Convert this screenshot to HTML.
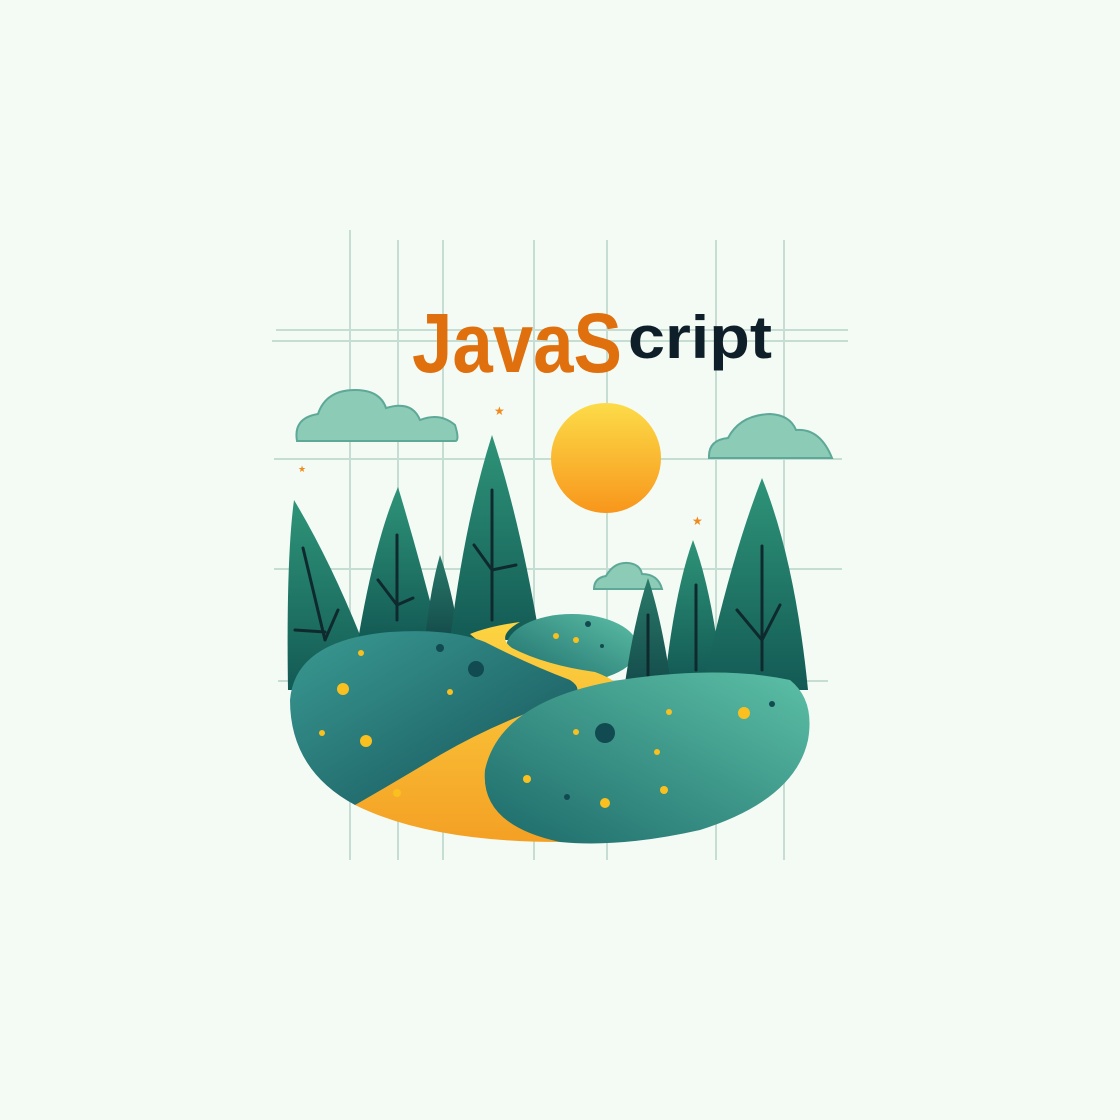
<!DOCTYPE html>
<html><head><meta charset="utf-8"><style>
html,body{margin:0;padding:0;background:#f4fbf5;}
svg{display:block}
</style></head><body>
<svg width="1120" height="1120" viewBox="0 0 1120 1120" xmlns="http://www.w3.org/2000/svg">
<defs>
<linearGradient id="sun" x1="0" y1="0" x2="0" y2="1"><stop offset="0" stop-color="#fcdc48"/><stop offset="1" stop-color="#f8961c"/></linearGradient>
<linearGradient id="tree" x1="0" y1="0" x2="0" y2="1"><stop offset="0" stop-color="#2e9478"/><stop offset="1" stop-color="#135a55"/></linearGradient>
<linearGradient id="tree2" x1="0" y1="0" x2="0" y2="1"><stop offset="0" stop-color="#2a7a6a"/><stop offset="1" stop-color="#134a4a"/></linearGradient>
<linearGradient id="hillL" x1="0" y1="0" x2="1" y2="1"><stop offset="0" stop-color="#3a9a92"/><stop offset="1" stop-color="#15525a"/></linearGradient>
<linearGradient id="hillR" x1="1" y1="0" x2="0" y2="1"><stop offset="0" stop-color="#5cc0a6"/><stop offset="1" stop-color="#1c6a6a"/></linearGradient>
<linearGradient id="path" x1="0" y1="0" x2="0" y2="1"><stop offset="0" stop-color="#fcd442"/><stop offset="1" stop-color="#f4a024"/></linearGradient>
</defs>
<rect width="1120" height="1120" fill="#f4fbf5"/>
<g stroke="#c5ddd2" stroke-width="2">
<line x1="350" y1="230" x2="350" y2="860"/><line x1="398" y1="240" x2="398" y2="860"/>
<line x1="443" y1="240" x2="443" y2="860"/><line x1="534" y1="240" x2="534" y2="860"/>
<line x1="607" y1="240" x2="607" y2="860"/><line x1="716" y1="240" x2="716" y2="860"/>
<line x1="784" y1="240" x2="784" y2="860"/>
<line x1="276" y1="330" x2="848" y2="330"/><line x1="272" y1="341" x2="848" y2="341"/>
<line x1="274" y1="459" x2="842" y2="459"/><line x1="274" y1="569" x2="842" y2="569"/>
<line x1="278" y1="681" x2="828" y2="681"/>
</g>
<text x="412" y="372" font-family="Liberation Sans, sans-serif" font-weight="bold" font-size="84" fill="#e0700e" textLength="210" lengthAdjust="spacingAndGlyphs">JavaS</text>
<text x="628" y="358" font-family="Liberation Sans, sans-serif" font-weight="bold" font-size="60" fill="#0e1f2a" textLength="144" lengthAdjust="spacingAndGlyphs">cript</text>
<g fill="#8ccbb6" stroke="#5ea898" stroke-width="2">
<path d="M297 441 Q293 418 318 414 Q326 390 355 390 Q380 390 386 408 Q412 400 420 420 Q440 412 455 425 Q460 441 455 441 Z"/>
<path d="M709 458 Q708 440 728 438 Q740 415 770 414 Q790 415 796 430 Q820 428 832 458 Z"/>
<path d="M594 589 Q594 578 606 576 Q614 562 628 563 Q640 564 642 574 Q658 574 662 589 Z"/>
</g>
<circle cx="606" cy="458" r="55" fill="url(#sun)"/>
<g fill="#f08a1c" font-size="12" font-family="DejaVu Sans"><text x="494" y="415">★</text><text x="298" y="472" font-size="9">★</text><text x="692" y="525">★</text></g>
<path d="M288 690 Q286 560 294 500 Q330 560 362 640 L360 690 Z" fill="url(#tree)"/>
<path d="M358 640 Q375 540 398 487 Q420 560 440 640 Z" fill="url(#tree)"/>
<path d="M425 640 Q430 590 440 555 Q452 590 460 640 Z" fill="url(#tree2)"/>
<path d="M450 640 Q465 520 492 435 Q520 520 540 640 Z" fill="url(#tree)"/>
<ellipse cx="572" cy="648" rx="66" ry="34" fill="url(#hillR)"/>
<path d="M665 680 Q675 590 693 540 Q712 590 722 680 Z" fill="url(#tree)"/>
<path d="M624 690 Q634 620 648 578 Q662 620 672 690 Z" fill="url(#tree2)"/>
<path d="M702 690 Q730 560 762 478 Q795 560 808 690 Z" fill="url(#tree)"/>
<g stroke="#0f2a2e" stroke-width="3" fill="none" stroke-linecap="round">
<path d="M303 548 L325 640 M295 630 L325 632 M325 640 L338 610"/>
<path d="M397 535 V620 M378 580 L397 605 L413 598"/>
<path d="M492 490 V620 M474 545 L492 570 L516 565"/>
<path d="M762 546 V670 M737 610 L762 640 L780 605"/>
<path d="M696 585 V670"/><path d="M648 615 V680"/>
</g>
<g fill="#f9c020"><circle cx="556" cy="636" r="3"/><circle cx="576" cy="640" r="3"/></g>
<g fill="#114a50"><circle cx="588" cy="624" r="3"/><circle cx="602" cy="646" r="2"/></g>
<path d="M470 634 Q490 626 520 622 Q495 636 512 648 Q545 665 595 672 Q630 685 615 698 Q545 735 500 780 Q500 815 560 842 Q430 842 355 805 Q380 770 440 740 Q520 705 560 690 Q560 675 520 660 Q485 648 470 634 Z" fill="url(#path)"/>
<path d="M290 700 Q295 640 390 632 Q450 628 485 642 Q530 665 570 680 Q585 690 570 698 Q500 720 440 755 Q390 785 355 805 Q290 770 290 700 Z" fill="url(#hillL)"/>
<path d="M560 842 Q480 825 485 770 Q500 700 620 680 Q720 665 790 680 Q815 700 808 740 Q795 800 700 830 Q620 848 560 842 Z" fill="url(#hillR)"/>
<g fill="#f9c020"><circle cx="343" cy="689" r="6"/><circle cx="366" cy="741" r="6"/><circle cx="322" cy="733" r="3"/><circle cx="361" cy="653" r="3"/><circle cx="450" cy="692" r="3"/><circle cx="397" cy="793" r="4"/><circle cx="744" cy="713" r="6"/><circle cx="669" cy="712" r="3"/><circle cx="657" cy="752" r="3"/><circle cx="605" cy="803" r="5"/><circle cx="664" cy="790" r="4"/><circle cx="576" cy="732" r="3"/><circle cx="527" cy="779" r="4"/></g>
<g fill="#114a50"><circle cx="476" cy="669" r="8"/><circle cx="605" cy="733" r="10"/><circle cx="440" cy="648" r="4"/><circle cx="567" cy="797" r="3"/><circle cx="772" cy="704" r="3"/></g>
</svg>
</body></html>
